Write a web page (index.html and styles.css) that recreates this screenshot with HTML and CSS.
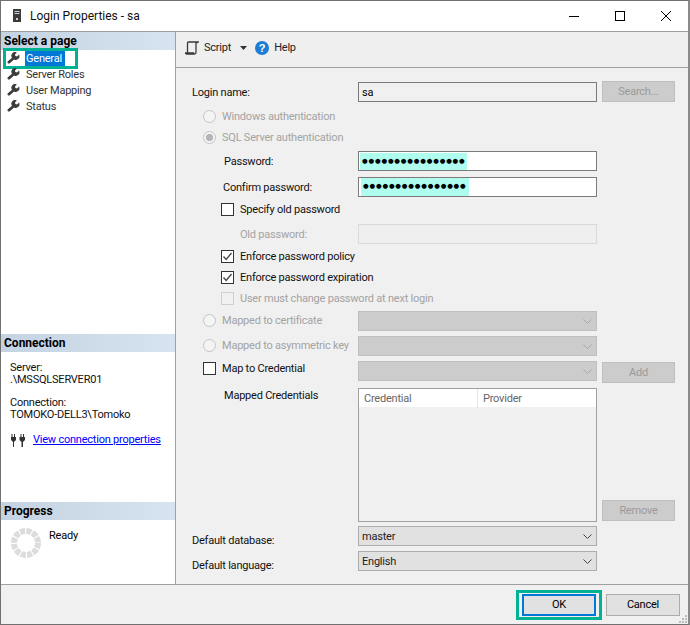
FILE: index.html
```html
<!DOCTYPE html>
<html lang="en">
<head>
<meta charset="utf-8">
<title>Login Properties - sa</title>
<link rel="stylesheet" href="styles.css">
</head>
<body>
<svg class="defs" width="0" height="0" aria-hidden="true">
  <symbol id="wrench" viewBox="0 0 14 13">
    <path d="M0.6 10.4 L5.4 6.2 A3.9 3.9 0 0 1 10.6 0.6 L8.6 2.6 L9 4.4 L10.9 4.8 L13 2.8 A3.9 3.9 0 0 1 7.6 8 L3 12.3 Q2 12.9 1 12.2 Q0.2 11.4 0.6 10.4 Z" fill="#3c3c3c"/>
  </symbol>
  <symbol id="chev" viewBox="0 0 9 5">
    <path d="M0.5 0.5 L4.5 4.5 L8.5 0.5" fill="none" stroke="currentColor" stroke-width="1"/>
  </symbol>
  <symbol id="check" viewBox="0 0 13 13">
    <path d="M2.5 6.5 L5.2 9.5 L10.5 3" fill="none" stroke="#4a4a4a" stroke-width="1.4"/>
  </symbol>
</svg>
<div class="window">
  <header class="titlebar">
    <svg class="app-icon" width="8" height="13" viewBox="0 0 8 13"><rect width="8" height="13" fill="#3b3b3b"/><rect x="1.5" y="2" width="5" height="1" fill="#cfcfcf"/><rect x="1.5" y="4" width="5" height="1" fill="#cfcfcf"/><rect x="3" y="9" width="2" height="2" fill="#cfcfcf"/></svg>
    <span class="title">Login Properties - sa</span>
    <div class="caption">
      <svg class="cap-btn" width="46" height="31" viewBox="0 0 46 31"><path d="M18 15.5 H28" stroke="#000" fill="none"/></svg>
      <svg class="cap-btn" width="46" height="31" viewBox="0 0 46 31"><rect x="18.5" y="10.5" width="9" height="9" fill="none" stroke="#000"/></svg>
      <svg class="cap-btn" width="46" height="31" viewBox="0 0 46 31"><path d="M18 10 L28 20 M28 10 L18 20" stroke="#000" fill="none"/></svg>
    </div>
  </header>
  <div class="body">
    <aside class="sidebar">
      <section class="side side-pages">
        <h2 class="side-head">Select a page</h2>
        <ul class="nav">
          <li class="nav-item is-active"><svg class="wrench"><use href="#wrench"/></svg><span class="nav-sel">General</span><span class="mark-general"></span></li>
          <li class="nav-item"><svg class="wrench"><use href="#wrench"/></svg><span class="nav-text">Server Roles</span></li>
          <li class="nav-item"><svg class="wrench"><use href="#wrench"/></svg><span class="nav-text">User Mapping</span></li>
          <li class="nav-item"><svg class="wrench"><use href="#wrench"/></svg><span class="nav-text">Status</span></li>
        </ul>
      </section>
      <section class="side side-conn">
        <h2 class="side-head">Connection</h2>
        <div class="conn-block">
          <div>Server:</div>
          <div>.\MSSQLSERVER01</div>
        </div>
        <div class="conn-block">
          <div>Connection:</div>
          <div>TOMOKO-DELL3\Tomoko</div>
        </div>
        <div class="conn-link">
          <svg class="plug" width="15" height="13" viewBox="0 0 15 13"><path d="M1 3 V0 M3.5 3 V0 M10 3 V0 M12.5 3 V0" stroke="#333" fill="none"/><path d="M0 3 H5 V6 L3 8 V13 H2 V8 L0 6 Z M8.5 3 H14 V6 L12 8 V13 H10.5 V8 L8.5 6 Z" fill="#333"/></svg>
          <a class="link" href="#">View connection properties</a>
        </div>
      </section>
      <section class="side side-prog">
        <h2 class="side-head">Progress</h2>
        <div class="prog-body">
          <svg class="spinner" width="30" height="30" viewBox="0 0 30 30"><circle cx="15" cy="15" r="12" fill="none" stroke="#dcdcdc" stroke-width="6" stroke-dasharray="5.1 1.18"/></svg>
          <span class="ready">Ready</span>
        </div>
      </section>
    </aside>
    <main class="main">
      <div class="toolbar">
        <svg class="tb-script" width="14" height="14" viewBox="0 0 14 14"><path d="M3.5 1 H13 L11 2.2 V11.5 Q11 13 9.5 13 H1.5 Q0.5 13 0.5 12 H8.5 V12.5 M3.5 1 Q2.5 1 2.5 2 V12 M11 2 V1" fill="none" stroke="#3a3a3a" stroke-width="1.3"/></svg>
        <span class="tb-label">Script</span>
        <svg class="tb-caret" width="7" height="4" viewBox="0 0 7 4"><path d="M0 0 H7 L3.5 4 Z" fill="#333"/></svg>
        <svg class="tb-help" width="14" height="14" viewBox="0 0 14 14"><circle cx="7" cy="7" r="7" fill="#1c7cd6"/><text class="help-q" x="7" y="11" text-anchor="middle">?</text></svg>
        <span class="tb-label">Help</span>
      </div>
      <form class="form">
        <div class="row">
          <span class="lbl">Login name:</span>
          <span class="field">sa</span>
          <span class="btn btn-off btn-search">Search...</span>
        </div>
        <div class="row mt4">
          <span class="opt in-11"><span class="radio"></span><span class="off">Windows authentication</span></span>
        </div>
        <div class="row mt1">
          <span class="opt in-11"><span class="radio radio-on"></span><span class="off">SQL Server authentication</span></span>
        </div>
        <div class="row mt4">
          <span class="lbl in-32">Password:</span>
          <span class="field field-white"><span class="dots dots-a">●●●●●●●●●●●●●●●●</span></span>
        </div>
        <div class="row mt6">
          <span class="lbl in-31">Confirm password:</span>
          <span class="field field-white"><span class="dots dots-b">●●●●●●●●●●●●●●●●</span></span>
        </div>
        <div class="row mt2">
          <span class="opt in-29"><span class="check"></span><span>Specify old password</span></span>
        </div>
        <div class="row mt5">
          <span class="lbl in-48 off">Old password:</span>
          <span class="field field-off"></span>
        </div>
        <div class="row mt2">
          <span class="opt in-29"><span class="check"><svg width="13" height="13"><use href="#check"/></svg></span><span>Enforce password policy</span></span>
        </div>
        <div class="row mt1">
          <span class="opt in-29"><span class="check"><svg width="13" height="13"><use href="#check"/></svg></span><span>Enforce password expiration</span></span>
        </div>
        <div class="row mt1">
          <span class="opt in-29 wide"><span class="check check-off"></span><span class="off">User must change password at next login</span></span>
        </div>
        <div class="row mt3">
          <span class="opt in-11 up1"><span class="radio"></span><span class="off">Mapped to certificate</span></span>
          <span class="combo combo-off"><svg class="chev" width="9" height="5"><use href="#chev"/></svg></span>
        </div>
        <div class="row mt5">
          <span class="opt in-11 up1"><span class="radio"></span><span class="off">Mapped to asymmetric key</span></span>
          <span class="combo combo-off"><svg class="chev" width="9" height="5"><use href="#chev"/></svg></span>
        </div>
        <div class="row mt5">
          <span class="opt in-11 up2"><span class="check"></span><span>Map to Credential</span></span>
          <span class="combo combo-off"><svg class="chev" width="9" height="5"><use href="#chev"/></svg></span>
          <span class="btn btn-off btn-add">Add</span>
        </div>
        <div class="row row-grid mt7">
          <span class="lbl in-32 lbl-top">Mapped Credentials</span>
          <div class="grid">
            <div class="grid-head"><span class="gh-a">Credential</span><span class="gh-b">Provider</span></div>
          </div>
          <span class="btn btn-off btn-bottom">Remove</span>
        </div>
        <div class="row mt4">
          <span class="lbl lbl-low">Default database:</span>
          <span class="combo"><span class="combo-text">master</span><svg class="chev" width="9" height="5"><use href="#chev"/></svg></span>
        </div>
        <div class="row mt5">
          <span class="lbl lbl-low">Default language:</span>
          <span class="combo"><span class="combo-text">English</span><svg class="chev" width="9" height="5"><use href="#chev"/></svg></span>
        </div>
      </form>
    </main>
  </div>
  <footer class="footer">
    <span class="ok-mark"><span class="fbtn fbtn-default">OK</span></span>
    <span class="fbtn">Cancel</span>
    <svg class="grip" width="10" height="10" viewBox="0 0 10 10"><path d="M7 1h2v2h-2z M4 4h2v2h-2z M7 4h2v2h-2z M1 7h2v2h-2z M4 7h2v2h-2z M7 7h2v2h-2z" fill="#bdbdbd"/></svg>
  </footer>
</div>
</body>
</html>
```
FILE: styles.css
```css
* { box-sizing: border-box; }
html, body { margin: 0; padding: 0; }
body {
  width: 690px;
  height: 625px;
  overflow: hidden;
  background: #fff;
  font-family: Roboto, "Open Sans", sans-serif;
  font-size: 11px;
  letter-spacing: -0.22px;
  line-height: 16px;
  color: #000;
}
.defs { position: absolute; }
.window {
  width: 690px;
  height: 625px;
  display: flex;
  flex-direction: column;
  border: 1px solid #707070;
  border-right: 2px solid #8a8a8a;
  background: #f0f0f0;
}
.titlebar {
  height: 31px;
  flex: none;
  display: flex;
  align-items: center;
  background: #fff;
  border-bottom: 1px solid #a0a0a0;
  padding-left: 12px;
}
.app-icon { margin-top: -1px; }
.title { margin-left: 9px; font-size: 12px; letter-spacing: 0; color: #111; }
.caption { margin-left: auto; display: flex; margin-right: -1px; }
.cap-btn { display: block; }
.body { flex: 1; min-height: 0; display: flex; }
.sidebar {
  width: 175px;
  flex: none;
  display: flex;
  flex-direction: column;
  background: #fff;
  border-right: 1px solid #a0a0a0;
}
.side-pages { height: 303px; }
.side-conn { height: 168px; }
.side-prog { height: 82px; }
.side-head {
  margin: 0;
  height: 18px;
  padding-left: 3px;
  font-size: 12px;
  letter-spacing: 0;
  line-height: 18px;
  font-weight: 700;
  background: linear-gradient(90deg, #c4d3e2, #d7e3f0);
}
.nav { list-style: none; margin: 0; padding: 0; }
.nav-item {
  height: 16px;
  display: flex;
  align-items: center;
  padding-left: 6px;
  color: #333;
  position: relative;
}
.nav-text { padding-top: 1px; }
.wrench { width: 13px; height: 12px; flex: none; margin-right: 6px; }
.nav-item.is-active { color: #fff; }
.nav-sel { background: #0078d7; padding: 1px 1px 0; margin-left: -1px; width: 40px; white-space: nowrap; }
.mark-general {
  position: absolute;
  left: 2px;
  top: -2px;
  width: 75px;
  height: 21px;
  border: 3px solid #00b294;
}
.conn-block { margin: 10px 0 0 9px; line-height: 12px; color: #111; }
.conn-block + .conn-block { margin-top: 11px; }
.conn-link { display: flex; align-items: center; margin: 11px 0 0 10px; gap: 7px; white-space: nowrap; }
.link { color: #0000ff; text-decoration: underline; }
.prog-body { display: flex; padding: 8px 0 0 10px; align-items: flex-start; }
.ready { margin-left: 8px; }
.main { flex: 1; min-width: 0; display: flex; flex-direction: column; }
.toolbar {
  height: 36px;
  flex: none;
  display: flex;
  align-items: center;
  padding: 0 0 3px 9px;
  border-bottom: 1px solid #a0a0a0;
  background: #efefef;
  color: #222;
}
.tb-script { margin-right: 5px; }
.tb-caret { margin: 0 8px 0 9px; }
.tb-help { margin-right: 5px; }
.help-q { font: 700 11px "Liberation Sans", sans-serif; fill: #fff; }
.form { padding: 14px 0 0 16px; display: flex; flex-direction: column; }
.row {
  height: 20px;
  display: grid;
  grid-template-columns: 166px 239px 73px;
  grid-template-rows: 20px;
  column-gap: 0;
  align-items: center;
}
.row > :nth-child(3) { margin-left: 5px; width: 73px; }
.row-grid { height: 134px; grid-template-rows: 134px; align-items: start; }
.mt1 { margin-top: 1px; }
.mt2 { margin-top: 2px; }
.mt3 { margin-top: 3px; }
.mt4 { margin-top: 4px; }
.mt5 { margin-top: 5px; }
.mt6 { margin-top: 6px; }
.mt7 { margin-top: 7px; }
.lbl { white-space: nowrap; color: #111; padding-top: 1px; }
.lbl-top { margin-top: -1px; }
.lbl-low { align-self: start; margin-top: 6px; }
.in-32 { padding-left: 32px; }
.in-31 { padding-left: 31px; }
.in-48 { padding-left: 48px; }
.in-29 { padding-left: 29px; }
.in-11 { padding-left: 11px; }
.up1 { margin-bottom: 2px; }
.up2 { margin-bottom: 5px; }
.off { color: #a3a3a3; }
.opt { display: flex; align-items: center; white-space: nowrap; color: #111; }
.opt > span:last-child { padding-top: 1px; }
.wide { grid-column: 1 / 3; }
.radio {
  width: 13px;
  height: 13px;
  flex: none;
  margin-right: 6px;
  border-radius: 50%;
  border: 1px solid #c4c4c4;
  background: #f4f4f4;
}
.radio-on { background: radial-gradient(circle, #b5b5b5 0 3.4px, #f4f4f4 3.9px); }
.check {
  width: 13px;
  height: 13px;
  flex: none;
  margin-right: 6px;
  border: 1px solid #333;
  background: #fff;
  position: relative;
  display: block;
}
.check svg { position: absolute; left: -1px; top: -1px; }
.check-off { border-color: #cfcfcf; background: #f0f0f0; }
.field {
  height: 20px;
  display: flex;
  align-items: center;
  padding: 1px 0 0 3px;
  border: 1px solid #7a7a7a;
  background: #f0f0f0;
  overflow: hidden;
}
.field-white { background: #fff; padding: 0 0 0 1px; }
.field-off { border-color: #d9d9d9; background: #efefef; }
.dots {
  display: block;
  background: #aefdee;
  color: #000;
  font-family: "DejaVu Sans", sans-serif;
  font-size: 6.5px;
  letter-spacing: 0.8px;
  line-height: 17px;
  height: 17px;
  padding-left: 2px;
  white-space: nowrap;
}
.dots-a { width: 107px; }
.dots-b { width: 108px; margin-left: 1px; height: 20px; line-height: 19px; }
.btn {
  height: 21px;
  display: flex;
  align-items: center;
  justify-content: center;
  border: 1px solid #adadad;
  background: #e1e1e1;
}
.btn-off { color: #9a9a9a; background: #cccccc; border-color: #bfbfbf; }
.btn-search { align-self: start; margin-top: -1px; }
.btn-add { align-self: start; margin-top: 1px; }
.btn-bottom { align-self: end; margin-bottom: 1px; }
.combo {
  height: 20px;
  display: flex;
  align-items: center;
  justify-content: space-between;
  padding: 0 4px 0 3px;
  border: 1px solid #adadad;
  background: #e1e1e1;
  color: #222;
}
.combo-text { padding-top: 1px; }
.chev { color: #444; margin-left: auto; }
.combo-off { background: #cccccc; border-color: #bfbfbf; }
.combo-off .chev { color: #a8a8a8; }
.grid {
  height: 134px;
  border: 1px solid #a0a0a0;
  background: #f0f0f0;
}
.grid-head {
  height: 18px;
  display: grid;
  grid-template-columns: 119px 1fr;
  background: #fff;
  color: #666;
  line-height: 19px;
}
.gh-a { padding-left: 5px; border-right: 1px solid #e5e5e5; }
.gh-b { padding-left: 5px; }
.footer {
  height: 40px;
  flex: none;
  display: flex;
  align-items: center;
  justify-content: flex-end;
  gap: 4px;
  padding-right: 8px;
  border-top: 1px solid #a0a0a0;
  background: #f0f0f0;
  position: relative;
}
.fbtn {
  width: 74px;
  height: 22px;
  display: flex;
  align-items: center;
  justify-content: center;
  border: 1px solid #adadad;
  background: #e1e1e1;
}
.fbtn-default { border: 2px solid #0078d7; }
.ok-mark {
  width: 86px;
  height: 30px;
  display: flex;
  align-items: center;
  justify-content: center;
  border: 3px solid #00b294;
}
.grip { position: absolute; right: 0; bottom: 0; }
```
